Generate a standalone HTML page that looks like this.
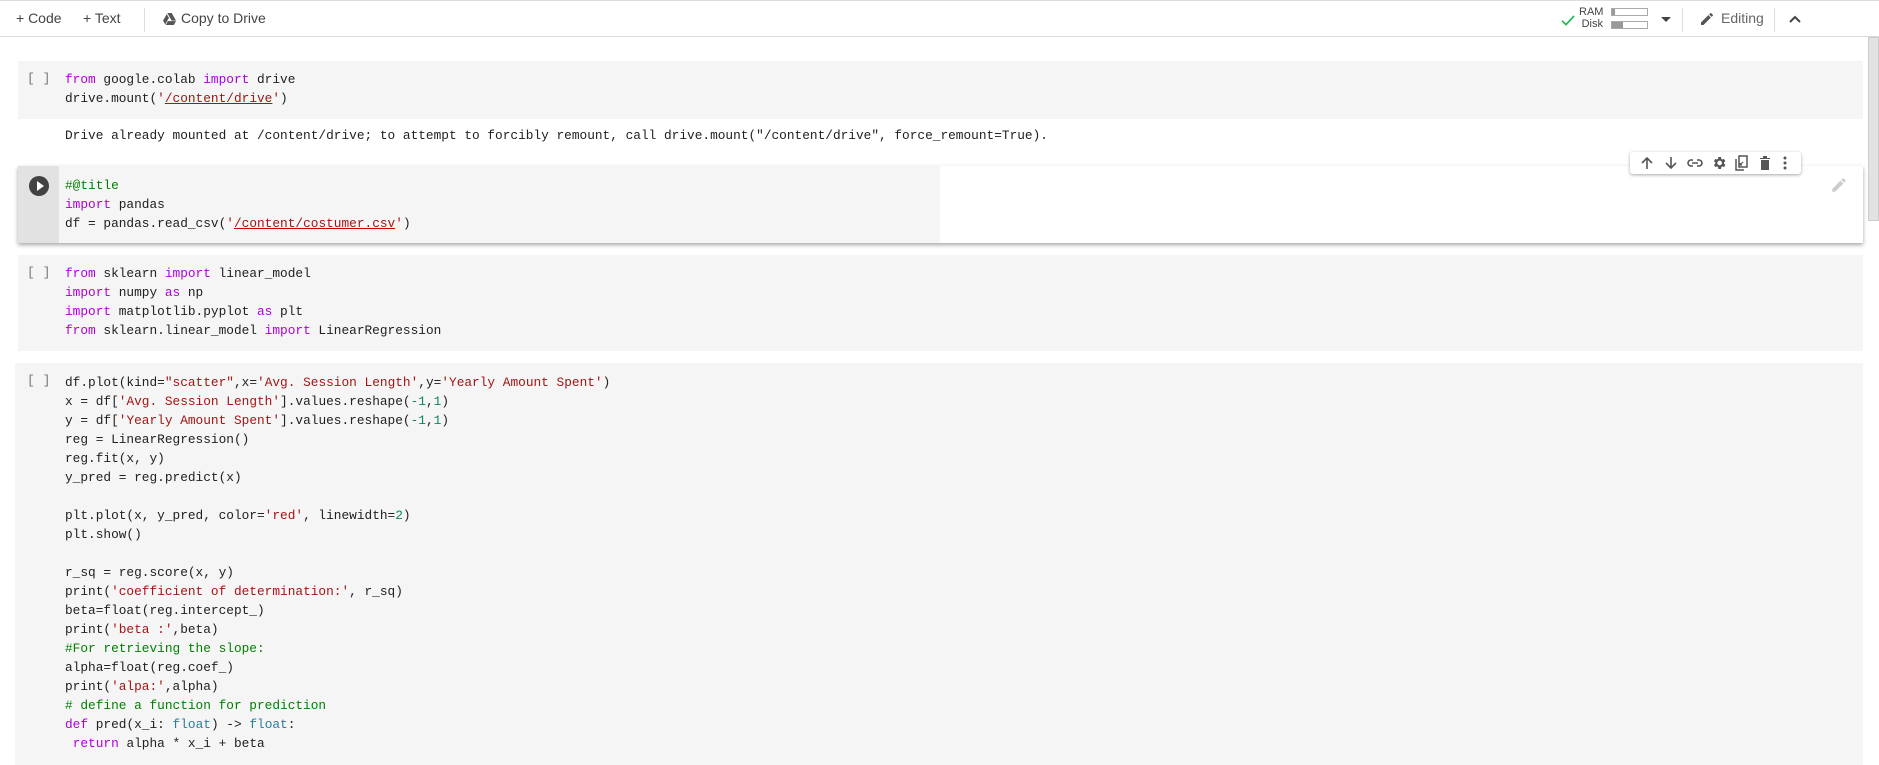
<!DOCTYPE html>
<html><head><meta charset="utf-8"><style>
*{margin:0;padding:0;box-sizing:border-box}
body{width:1879px;height:765px;overflow:hidden;background:#fff;font-family:"Liberation Sans",sans-serif;position:relative}
.top{position:absolute;left:0;top:0;width:1879px;height:37px;border-top:1px solid #ddd;border-bottom:1px solid #dadada;background:#fff}
.tb{position:absolute;top:9px;font-size:14px;color:#444}
.sep{position:absolute;top:7px;width:1px;height:24px;background:#ddd}
.cell{position:absolute;left:18px;width:1845px;background:#f5f5f5}
pre{font-family:"Liberation Mono",monospace;font-size:12.8px;line-height:19px;color:#212121;position:absolute;left:65px}
.br{position:absolute;left:27px;font-family:"Liberation Mono",monospace;font-size:13px;color:#777}
.k{color:#af00db}.s{color:#a31515}.c{color:#008000}.n{color:#098658}.u{text-decoration:underline;text-decoration-color:#c00}.t{color:#267f99}
</style></head><body>
<div class="top">
<div class="tb" style="left:16px">+ Code</div>
<div class="tb" style="left:83px">+ Text</div>
<div class="sep" style="left:144px"></div>
<svg style="position:absolute;left:163px;top:12px" width="13" height="12" viewBox="0 0 24 22"><path d="M8 0h8l8 14h-8zM7 2l4 7-7 12-4-7zM9 15h15l-4 7H5z" fill="#555"/></svg>
<div class="tb" style="left:181px">Copy to Drive</div>
<svg style="position:absolute;left:1560px;top:11px" width="16" height="16" viewBox="0 0 24 24"><path d="M3 13l6 6L21 6" stroke="#1db954" stroke-width="2.5" fill="none"/></svg>
<div style="position:absolute;left:1579px;top:5px;font-size:11px;color:#444;line-height:12px;text-align:right;width:24px">RAM<br>Disk</div>
<div style="position:absolute;left:1611px;top:7px;width:37px;height:8px;border:1px solid #aaa"><div style="width:3px;height:6px;background:#999"></div></div>
<div style="position:absolute;left:1611px;top:20px;width:37px;height:8px;border:1px solid #aaa"><div style="width:11px;height:6px;background:#999"></div></div>
<div style="position:absolute;left:1661px;top:16px;border:5px solid transparent;border-top:5px solid #444;border-bottom:0"></div>
<div class="sep" style="left:1682px"></div>
<svg style="position:absolute;left:1699px;top:10px" width="16" height="16" viewBox="0 0 24 24"><path d="M3 17.25V21h3.75L17.81 9.94l-3.75-3.75zM20.71 7.04a1 1 0 000-1.41l-2.34-2.34a1 1 0 00-1.41 0l-1.830 1.83 3.75 3.75z" fill="#555"/></svg>
<div class="tb" style="left:1721px;color:#666">Editing</div>
<div class="sep" style="left:1774px"></div>
<svg style="position:absolute;left:1788px;top:12px" width="14" height="12" viewBox="0 0 14 12"><path d="M2 9l5-5 5 5" stroke="#444" stroke-width="2" fill="none"/></svg>
</div>
<div style="position:absolute;left:1868px;top:37px;width:11px;height:184px;background:#e2e2e2;border:1px solid #ccc"></div>

<div class="cell" style="top:61px;height:58px"><div class="br" style="top:10px;left:9px">[ ]</div></div>
<pre style="top:70px"><span class="k">from</span> google.colab <span class="k">import</span> drive
drive.mount(<span class="s">'<span class="u">/content/drive</span>'</span>)</pre>
<pre style="top:126px">Drive already mounted at /content/drive; to attempt to forcibly remount, call drive.mount("/content/drive", force_remount=True).</pre>

<div style="position:absolute;left:18px;top:166px;width:1845px;height:77px;background:#fff;box-shadow:0 2px 4px rgba(0,0,0,.35)">
<div style="position:absolute;left:0;top:0;width:922px;height:77px;background:#f5f5f5"></div>
<div style="position:absolute;left:0;top:0;width:41px;height:77px;background:#e2e2e2"></div>
<div style="position:absolute;left:11px;top:10px;width:20px;height:20px;border-radius:50%;background:#424242"></div>
<div style="position:absolute;left:19px;top:15px;border-left:7px solid #fff;border-top:5px solid transparent;border-bottom:5px solid transparent"></div>
<svg style="position:absolute;left:1812px;top:10px" width="18" height="18" viewBox="0 0 24 24"><path d="M3 17.25V21h3.75L17.81 9.94l-3.75-3.75zM20.71 7.04a1 1 0 000-1.41l-2.34-2.34a1 1 0 00-1.41 0l-1.83 1.83 3.75 3.75z" fill="#ccc"/></svg>
</div>
<pre style="top:176px"><span class="c">#@title</span>
<span class="k">import</span> pandas
df = pandas.read_csv(<span class="s">'<span class="u">/content/costumer.csv</span>'</span>)</pre>
<div style="position:absolute;left:1630px;top:152px;width:171px;height:22px;background:#fff;border-radius:3px;box-shadow:0 1px 3px rgba(0,0,0,.35);font-size:15px;color:#555">
<svg style="position:absolute;left:10px;top:4px" width="14" height="14" viewBox="0 0 14 14"><path d="M7 13V2M2 7l5-5 5 5" stroke="#555" stroke-width="1.6" fill="none"/></svg>
<svg style="position:absolute;left:34px;top:4px" width="14" height="14" viewBox="0 0 14 14"><path d="M7 1v11M2 7l5 5 5-5" stroke="#555" stroke-width="1.6" fill="none"/></svg>
<svg style="position:absolute;left:57px;top:5px" width="16" height="12" viewBox="0 0 16 12"><path d="M6 3H4a3 3 0 000 6h2M10 3h2a3 3 0 010 6h-2M5 6h6" stroke="#555" stroke-width="1.6" fill="none"/></svg>
<svg style="position:absolute;left:81px;top:3px" width="16" height="16" viewBox="0 0 24 24"><path d="M19.4 13a7.5 7.5 0 000-2l2.1-1.6-2-3.5-2.5 1a7 7 0 00-1.7-1L15 3h-4l-.4 2.9a7 7 0 00-1.7 1l-2.5-1-2 3.5L6.6 11a7.5 7.5 0 000 2l-2.1 1.6 2 3.5 2.5-1a7 7 0 001.7 1L11 21h4l.4-2.9a7 7 0 001.7-1l2.5 1 2-3.5zM13 15.5a3.5 3.5 0 110-7 3.5 3.5 0 010 7z" fill="#555"/></svg>
<svg style="position:absolute;left:104px;top:3px" width="15" height="16" viewBox="0 0 15 16"><path d="M5 1h8v11H5zM2 4v11h8" stroke="#555" stroke-width="1.5" fill="none"/><path d="M6 10l3-3M6 8v2h2" stroke="#555" stroke-width="1.2" fill="none"/></svg>
<svg style="position:absolute;left:128px;top:3px" width="14" height="16" viewBox="0 0 14 16"><path d="M2 3h10v1H2zM5 1h4v2H5zM3 5h8v10H3z" fill="#555"/></svg>
<svg style="position:absolute;left:152px;top:4px" width="6" height="14" viewBox="0 0 6 14"><circle cx="3" cy="2" r="1.5" fill="#555"/><circle cx="3" cy="7" r="1.5" fill="#555"/><circle cx="3" cy="12" r="1.5" fill="#555"/></svg>
</div>

<div class="cell" style="top:255px;height:96px"><div class="br" style="top:10px;left:9px">[ ]</div></div>
<pre style="top:264px"><span class="k">from</span> sklearn <span class="k">import</span> linear_model
<span class="k">import</span> numpy <span class="k">as</span> np
<span class="k">import</span> matplotlib.pyplot <span class="k">as</span> plt
<span class="k">from</span> sklearn.linear_model <span class="k">import</span> LinearRegression</pre>

<div class="cell" style="top:363px;height:402px;left:15px;width:1848px"><div class="br" style="top:10px;left:12px">[ ]</div></div>
<pre style="top:373px">df.plot(kind=<span class="s">"scatter"</span>,x=<span class="s">'Avg. Session Length'</span>,y=<span class="s">'Yearly Amount Spent'</span>)
x = df[<span class="s">'Avg. Session Length'</span>].values.reshape(<span class="n">-1</span>,<span class="n">1</span>)
y = df[<span class="s">'Yearly Amount Spent'</span>].values.reshape(<span class="n">-1</span>,<span class="n">1</span>)
reg = LinearRegression()
reg.fit(x, y)
y_pred = reg.predict(x)

plt.plot(x, y_pred, color=<span class="s">'red'</span>, linewidth=<span class="n">2</span>)
plt.show()

r_sq = reg.score(x, y)
print(<span class="s">'coefficient of determination:'</span>, r_sq)
beta=float(reg.intercept_)
print(<span class="s">'beta :'</span>,beta)
<span class="c">#For retrieving the slope:</span>
alpha=float(reg.coef_)
print(<span class="s">'alpa:'</span>,alpha)
<span class="c"># define a function for prediction</span>
<span class="k">def</span> pred(x_i: <span class="t">float</span>) -&gt; <span class="t">float</span>:
 <span class="k">return</span> alpha * x_i + beta</pre>
</body></html>
